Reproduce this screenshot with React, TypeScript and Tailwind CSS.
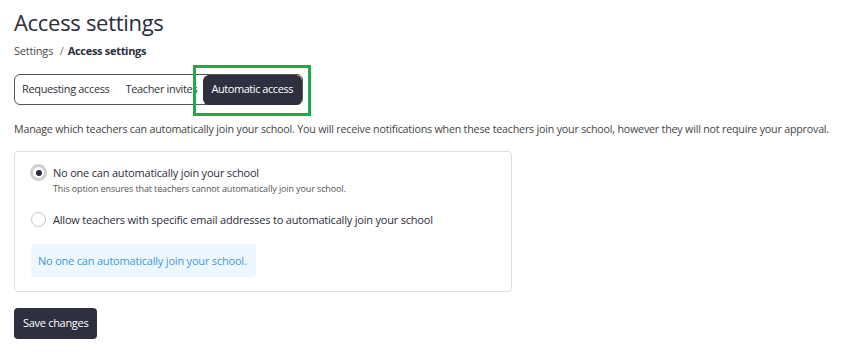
import React, { useState } from "react";

function Radio({ checked }: { checked: boolean }) {
	return checked ? (
		<span className="flex h-[17px] w-[17px] shrink-0 items-center justify-center rounded-full border-[3px] border-[#cfcfcf] bg-white">
			<span className="h-[6px] w-[6px] rounded-full bg-[#2b2d3a]" />
		</span>
	) : (
		<span className="ml-[1px] mr-[1px] mt-[1px] h-[15px] w-[15px] shrink-0 rounded-full border border-[#c4c4c4] bg-white" />
	);
}

export default function App() {
	const [option, setOption] = useState(0);

	return (
		<div className="min-h-[352px] w-[849px] bg-white px-[14px] pt-[8px] text-[#2b2d3a] [font-family:'Open_Sans',sans-serif]">
			<h1 className="text-[22px] leading-[28px] tracking-[-0.3px] text-[#2b2d3a]">Access settings</h1>
			<div className="mt-[7px] text-[11px] leading-[16px] tracking-[-0.2px] text-[#4a4a4a]">
				Settings <span className="mx-[4px] text-[#777]">/</span>
				<span className="font-bold tracking-[-0.3px] text-[#2b2d3a]">Access settings</span>
			</div>

			<div className="mt-[15px] flex">
				<div className="flex h-[31px] items-stretch rounded-[6px] border border-[#555] text-[11px] tracking-[-0.35px] text-[#333]">
					<div className="flex items-center pl-[7px] pr-[16px]">Requesting access</div>
					<div className="flex w-[77px] items-center overflow-hidden whitespace-nowrap">Teacher invites</div>
					<div className="relative -my-px flex items-center">
						<div className="flex h-[30px] items-center rounded-[6px] bg-[#2e3040] px-[9px] tracking-[-0.45px] text-white">
							Automatic access
						</div>
						<div className="pointer-events-none absolute -bottom-[11px] -left-[10px] -right-[9px] -top-[9px] border-[3px] border-[#1faa4a]" />
					</div>
				</div>
			</div>

			<p className="mt-[16px] whitespace-nowrap text-[10.7px] leading-[16px] tracking-[-0.2px] text-[#444]">
				Manage which teachers can automatically join your school. You will receive notifications when these teachers join your school, however they will not require your approval.
			</p>

			<div className="mt-[14px] w-[498px] rounded-[4px] border border-[#dedede] px-[15px] pb-[14px] pt-[12px]">
				<label className="flex cursor-pointer gap-[6px]" onClick={() => setOption(0)}>
					<Radio checked={option === 0} />
					<div>
						<div className="text-[11px] leading-[18px] tracking-[-0.2px] text-[#2b2d3a]">
							No one can automatically join your school
						</div>
						<div className="text-[9px] leading-[13px] tracking-[-0.12px] text-[#555]">
							This option ensures that teachers cannot automatically join your school.
						</div>
					</div>
				</label>
				<label className="mt-[16px] flex cursor-pointer gap-[6px]" onClick={() => setOption(1)}>
					<Radio checked={option === 1} />
					<div className="text-[11px] leading-[18px] tracking-[-0.2px] text-[#2b2d3a]">
						Allow teachers with specific email addresses to automatically join your school
					</div>
				</label>
				<div className="ml-px mt-[15px] w-[225px] whitespace-nowrap rounded-[4px] bg-[#eef7fe] px-[7px] py-[8px] text-[11px] leading-[17px] tracking-[-0.2px] text-[#3d9ad6]">
					No one can automatically join your school.
				</div>
			</div>

			<button className="mt-[16px] h-[31px] rounded-[4px] bg-[#2e3040] px-[9px] text-[11px] tracking-[-0.3px] text-white">
				Save changes
			</button>
		</div>
	);
}
